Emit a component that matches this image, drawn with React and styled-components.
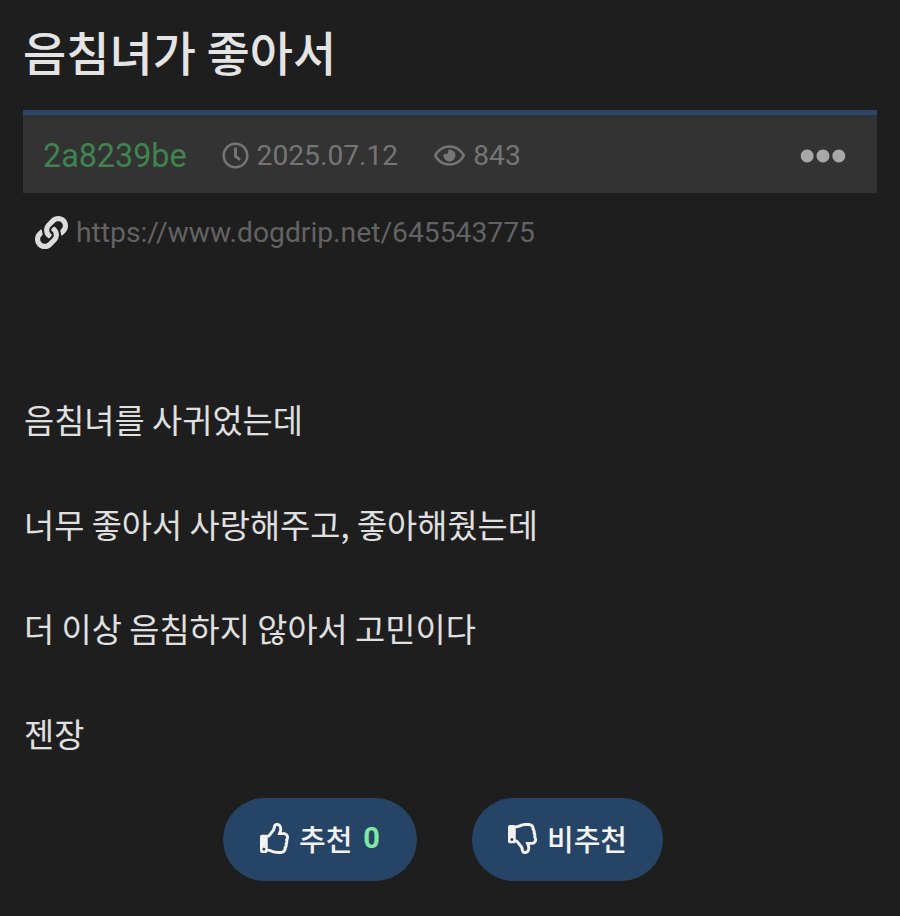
import React from 'react';
import styled, { createGlobalStyle } from 'styled-components';
import { FaLink, FaEllipsisH, FaRegThumbsUp, FaRegThumbsDown, FaRegEye, FaRegClock } from 'react-icons/fa';

const Global = createGlobalStyle`
  html, body { margin: 0; padding: 0; background: #1e1e1e; }
  body { font-family: Roboto, "Noto Sans CJK KR", sans-serif; }
`;
const Page = styled.div`
  width: 900px; height: 916px; box-sizing: border-box; padding: 0 23px; background: #1e1e1e;
  display: flex; flex-direction: column; overflow: hidden;
`;
const Title = styled.h1`
  margin: 23px 0 0; height: 56px; font-size: 47px; line-height: 56px; font-weight: 500; color: #e4e4e4;
  font-family: "Noto Sans CJK KR", sans-serif; letter-spacing: 0; white-space: nowrap;
`;
const Meta = styled.div`
  margin-top: 31px; height: 83px; box-sizing: border-box; background: #333333; border-top: 5px solid #2c4668;
  display: flex; align-items: center; padding: 3px 31px 0 20px; color: #757575; font-size: 28.2px;
`;
const Author = styled.span`color: #41834f; font-size: 32.3px; margin-right: 35px; `;
const Info = styled.span`
  display: inline-flex; align-items: center; gap: 8px; margin-right: 36px;
  svg { flex: none; }
`;
const More = styled.span`margin-left: auto; display: flex; color: #a8a8a8;`;
const LinkRow = styled.div`
  display: flex; align-items: center; gap: 8px; margin-top: 20px; padding-left: 12px; height: 38px;
  color: #636363; font-size: 28.25px; svg { color: #dcdcdc; flex: none; }
`;
const Body = styled.div`
  margin-top: 150px; display: flex; flex-direction: column; gap: 69.5px; color: #e0e0e0; font-size: 32.8px;
  font-family: "Noto Sans CJK KR", sans-serif; font-weight: 400; padding-left: 1px;
`;
const Para = styled.p`margin: 0; height: 35px; line-height: 35px; white-space: nowrap;`;
const Votes = styled.div`display: flex; margin-top: 48.5px; padding-left: 200px; gap: 55px;`;
const VoteButton = styled.div`
  height: 83px; width: ${p => p.$w}px; box-sizing: border-box; border-radius: 42px; background: #264466; color: #f2f2f2;
  display: flex; align-items: center; justify-content: center; gap: 8px; font-size: 29px; font-weight: 500;
  font-family: "Noto Sans CJK KR", sans-serif; padding-bottom: 3px;
`;
const Count = styled.span`color: #7fe8a2; font-weight: 700; font-family: Roboto, sans-serif; margin-left: 3px;`;

export default function App() {
  return (
    <Page>
      <Global />
      <Title>음침녀가 좋아서</Title>
      <Meta>
        <Author>2a8239be</Author>
        <Info><FaRegClock size={27} />2025.07.12</Info>
        <Info><FaRegEye size={31} />843</Info>
        <More><FaEllipsisH size={46} /></More>
      </Meta>
      <LinkRow><FaLink size={33} />https://www.dogdrip.net/645543775</LinkRow>
      <Body>
        <Para>음침녀를 사귀었는데</Para>
        <Para>너무 좋아서 사랑해주고, 좋아해줬는데</Para>
        <Para>더 이상 음침하지 않아서 고민이다</Para>
        <Para>젠장</Para>
      </Body>
      <Votes>
        <VoteButton $w={194}><FaRegThumbsUp size={31} />추천<Count>0</Count></VoteButton>
        <VoteButton $w={191}><FaRegThumbsDown size={31} />비추천</VoteButton>
      </Votes>
    </Page>
  );
}
